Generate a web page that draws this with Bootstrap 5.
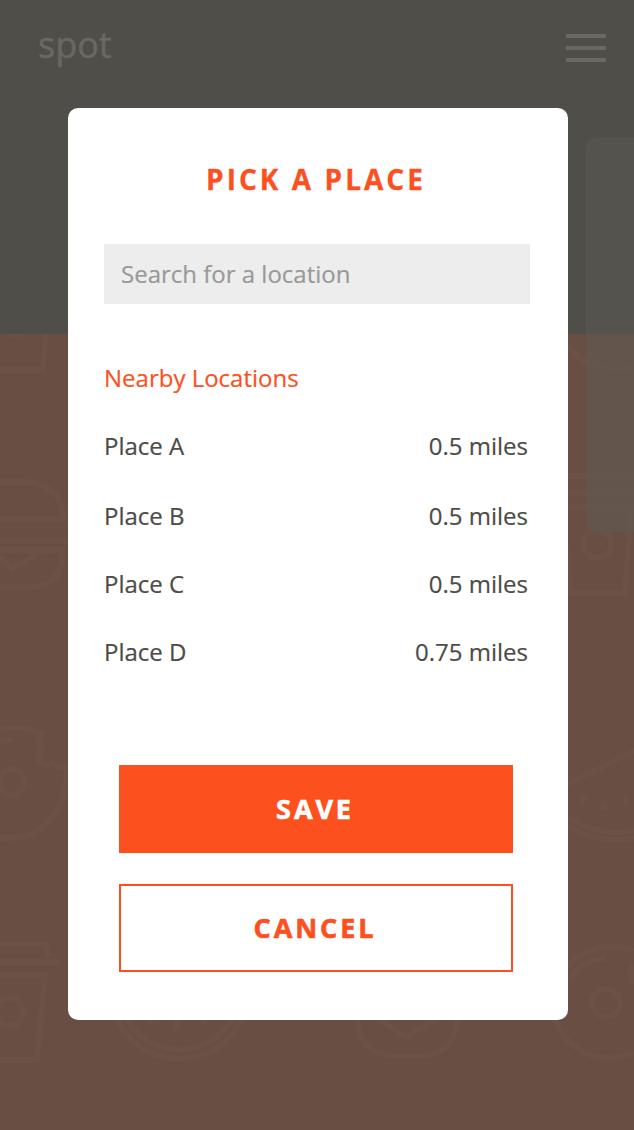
<!DOCTYPE html>
<html lang="en">
<head>
<meta charset="utf-8">
<meta name="viewport" content="width=device-width, initial-scale=1">
<title>spot</title>
<link href="https://cdn.jsdelivr.net/npm/bootstrap@5.3.0/dist/css/bootstrap.min.css" rel="stylesheet">
<style>
  :root { --spot-orange: #fc511f; --spot-ink: #4d4c47; }
  body { font-family: "Open Sans", "Noto Sans", sans-serif; color: var(--spot-ink); font-size: 24px; line-height: 36px; }
  .stage { height: 1130px; background: linear-gradient(#4f4e48 334px, #684e43 334px); }
  .pattern { width: 634px; height: 1130px; }
  .topbar { height: 108px; padding: 0 28px 18px 38px; }
  .brand { font-size: 36px; line-height: 54px; color: #696862; -webkit-text-stroke: .5px; }
  .menu-btn { width: 40px; height: 28px; margin-top: 5px; }
  .menu-btn span { height: 4px; background: #696862; }
  .picker { width: 500px; height: 912px; margin-left: 68px; border-radius: 10px; padding: 50px 38px 48px 36px; color: inherit; }
  .picker > * { flex-shrink: 0; }
  .picker-title { font-size: 28px; line-height: 42px; letter-spacing: 3.05px; color: var(--spot-orange); margin-bottom: 44px; padding-right: 2px; -webkit-text-stroke: .3px; }
  .search-box { height: 60px; background: #ededed; font-size: 24px; padding: 0 17px 2px; color: #999; -webkit-text-stroke: .2px; }
  .search-box::placeholder { color: #999; opacity: 1; }
  .nearby { font-size: 24px; line-height: 36px; color: var(--spot-orange); margin: 56px 0 32px; -webkit-text-stroke: .2px; }
  .places { -webkit-text-stroke: .2px; }
  .places li { margin-bottom: 32px; padding-right: 2px; }
  .places li:first-child { margin-bottom: 34px; }
  .actions { gap: 31px; margin: 63px 17px 0 15px; }
  .btn-spot { height: 88px; font-size: 27px; font-weight: 700; letter-spacing: 2.9px; border: 2px solid var(--spot-orange); line-height: 36px; padding-right: 14px; -webkit-text-stroke: .6px; }
  .btn-fill { background: var(--spot-orange); }
  .btn-line { color: var(--spot-orange); }
</style>
</head>
<body>
<div class="stage position-relative overflow-hidden">
  <svg class="pattern position-absolute top-0 start-0" viewBox="0 0 634 1130" fill="none" stroke="#6c5146" stroke-width="6" aria-hidden="true">
    <defs><clipPath id="lower"><rect y="334" width="634" height="796"/></clipPath></defs>
    <g clip-path="url(#lower)">
      <!-- cup and burger, left edge -->
      <path d="M46 330 43 370H0"/><circle cx="15" cy="322" r="13"/>
      <path d="M0 482H30Q63 487 63 519H-4M0 541H68M0 550H62V557Q60 587 30 587H0M0 556 12 569 42 551"/>
      <!-- doughnut -->
      <path d="M0 729Q21 725 41 733C34 742 46 744 40 751 36 763 46 767 53 763 58 768 62 767 66 767 70 800 48 838 12 838H0M0 742 12 739"/><circle cx="12" cy="782" r="13"/>
      <!-- cup -->
      <path d="M0 944H45L49 958M0 962H60M0 975H45L37 1060H0"/><circle cx="9" cy="1012" r="14"/>
      <!-- pizza -->
      <path d="M117 1018C140 1072 218 1072 242 1018M126 1018C148 1060 210 1060 233 1018M177 1020V1030M152 1020 150 1024M203 1020 206 1024"/>
      <!-- burger -->
      <path d="M357 1018C358 1045 372 1056 396 1056H418C442 1056 456 1045 457 1018M376 1018 407 1037 438 1018"/>
      <!-- doughnut, bottom right -->
      <path d="M634 951C604 940 570 951 560 982 540 1018 572 1058 606 1058Q622 1058 634 1052M570 980Q580 959 606 959M634 965Q628 972 634 984"/><circle cx="606" cy="1003" r="14"/>
      <!-- pizza slice -->
      <path d="M566 785 636 750M566 817Q600 838 636 830M566 825Q600 846 636 838M585 796 581 803M604 801V810M623 798 628 804"/>
      <!-- bowl and cup -->
      <path d="M566 344Q590 375 634 367M566 476H634M566 493H634M566 507H634M566 540 570 593H625L631 508"/><circle cx="597" cy="544" r="14"/>
    </g>
    <path d="M634 138H596Q586 138 586 148V334H634Z" fill="#54534d" stroke="none"/>
    <path d="M634 334H586V522Q586 532 596 532H634Z" fill="#61584f" fill-opacity=".7" stroke="none"/>
  </svg>

  <nav class="topbar position-relative d-flex align-items-center justify-content-between">
    <span class="brand">spot</span>
    <div class="menu-btn d-flex flex-column justify-content-between" role="button" aria-label="Menu"><span></span><span></span><span></span></div>
  </nav>

  <section class="card picker border-0" role="dialog" aria-labelledby="title">
    <h1 class="picker-title text-center fw-bold" id="title">PICK A PLACE</h1>
    <input class="form-control search-box border-0 rounded-0" type="text" placeholder="Search for a location">
    <h2 class="nearby fw-normal">Nearby Locations</h2>
    <ul class="places list-unstyled mb-0">
      <li class="d-flex justify-content-between"><span>Place A</span><span>0.5 miles</span></li>
      <li class="d-flex justify-content-between"><span>Place B</span><span>0.5 miles</span></li>
      <li class="d-flex justify-content-between"><span>Place C</span><span>0.5 miles</span></li>
      <li class="d-flex justify-content-between"><span>Place D</span><span>0.75 miles</span></li>
    </ul>
    <div class="actions d-grid">
      <button class="btn btn-spot btn-fill rounded-0 text-white">SAVE</button>
      <button class="btn btn-spot btn-line rounded-0 bg-white">CANCEL</button>
    </div>
  </section>
</div>
<script src="https://cdn.jsdelivr.net/npm/bootstrap@5.3.0/dist/js/bootstrap.bundle.min.js"></script>
</body>
</html>
